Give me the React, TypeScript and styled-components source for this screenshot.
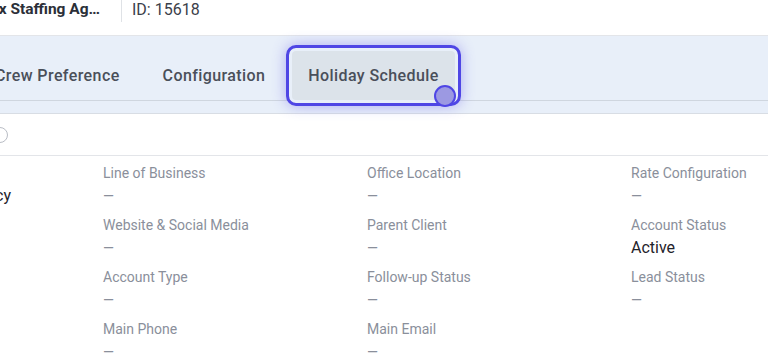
import styled, { createGlobalStyle } from "styled-components"

const GlobalStyle = createGlobalStyle`
  html, body {
    margin: 0;
    padding: 0;
    background: #ffffff;
    font-family: Roboto, "Liberation Sans", sans-serif;
    overflow: hidden;
  }
`

type Cell = { label: string; value: string; strong?: boolean }

const ACCOUNT = "Greenfox Staffing Agency"

const rows: Cell[][] = [
  [
    { label: "Company Name", value: ACCOUNT, strong: true },
    { label: "Line of Business", value: "—" },
    { label: "Office Location", value: "—" },
    { label: "Rate Configuration", value: "—" },
  ],
  [
    { label: "", value: "" },
    { label: "Website & Social Media", value: "—" },
    { label: "Parent Client", value: "—" },
    { label: "Account Status", value: "Active", strong: true },
  ],
  [
    { label: "", value: "" },
    { label: "Account Type", value: "—" },
    { label: "Follow-up Status", value: "—" },
    { label: "Lead Status", value: "—" },
  ],
  [
    { label: "", value: "" },
    { label: "Main Phone", value: "—" },
    { label: "Main Email", value: "—" },
    { label: "", value: "" },
  ],
]

export default function App() {
  return (
    <>
      <GlobalStyle />
      <Page>
        <Header>
          <AccountName>{ACCOUNT}</AccountName>
          <Divider />
          <AccountId>ID: 15618</AccountId>
        </Header>

        <TabBar>
          <TabList>
            <Tab>Crew Preference</Tab>
            <Tab>Configuration</Tab>
            <Tab active>
              Holiday Schedule
              <Cursor />
            </Tab>
          </TabList>
        </TabBar>

        <Toolbar>
          <Radio />
        </Toolbar>

        <Details>
          {rows.flat().map((f, i) => (
            <Field key={i}>
              <Label>{f.label}</Label>
              <Value strong={f.strong}>{f.value}</Value>
            </Field>
          ))}
        </Details>
      </Page>
    </>
  )
}

const Page = styled.div`
  width: 768px;
  height: 364px;
  overflow: hidden;
  background: #fff;
`

const Header = styled.div`
  display: flex;
  align-items: flex-start;
  height: 35px;
  border-bottom: 1px solid #e3e5e9;
`

const AccountName = styled.div`
  flex-shrink: 0;
  width: 162px;
  margin-left: -57px;
  font-size: 15.5px;
  font-weight: 700;
  color: #2b2f38;
  white-space: nowrap;
  overflow: hidden;
  text-overflow: ellipsis;
`

const Divider = styled.div`
  width: 1px;
  height: 22px;
  margin-left: 16px;
  background: #dfe2e6;
`

const AccountId = styled.div`
  margin-left: 10px;
  font-size: 16px;
  color: #3b404a;
`

const TabBar = styled.div`
  height: 77px;
  background: #e8eff9;
  border-bottom: 1px solid #d8dde4;
`

const TabList = styled.div`
  display: flex;
  align-items: flex-end;
  gap: 11px;
  height: 64px;
  margin-left: -21px;
  border-bottom: 1px solid #cfd6df;
`

const Tab = styled.div<{ active?: boolean }>`
  position: relative;
  display: flex;
  align-items: center;
  flex-shrink: 0;
  height: 49px;
  padding: 0 16px;
  font-size: 16px;
  font-weight: 500;
  letter-spacing: 0.4px;
  color: #4a4f5a;
  white-space: nowrap;
  background: ${({ active }) => (active ? "#dce3ea" : "transparent")};
  ${({ active }) =>
    active &&
    `
    outline: 3px solid #4f46e5;
    outline-offset: 3px;
    border-radius: 4px;
    box-shadow: 0 0 0 3px #e8eff9, 0 0 14px 6px rgba(99, 90, 235, 0.45);
  `}
`

const Cursor = styled.span`
  position: absolute;
  right: -1px;
  bottom: -7px;
  width: 18px;
  height: 18px;
  border-radius: 50%;
  background: #9c99e2;
  border: 2px solid #4f46e5;
`

const Toolbar = styled.div`
  display: flex;
  align-items: center;
  height: 41px;
  border-bottom: 1px solid #e3e5e9;
`

const Radio = styled.span`
  flex-shrink: 0;
  width: 14px;
  height: 14px;
  margin-left: -8px;
  border-radius: 50%;
  border: 1.5px solid #b9bdc5;
`

const Details = styled.div`
  display: grid;
  grid-template-columns: 272px repeat(3, 264px);
  grid-auto-rows: 52px;
  margin-left: -169px;
  padding-top: 8px;
`

const Field = styled.div`
  display: flex;
  flex-direction: column;
  gap: 4px;
`

const Label = styled.div`
  font-size: 14px;
  line-height: 18px;
  color: #8a8f9b;
  white-space: nowrap;
`

const Value = styled.div<{ strong?: boolean }>`
  font-size: ${({ strong }) => (strong ? "16px" : "14px")};
  line-height: 20px;
  color: ${({ strong }) => (strong ? "#1f232b" : "#8a8f9b")};
  white-space: nowrap;
`
